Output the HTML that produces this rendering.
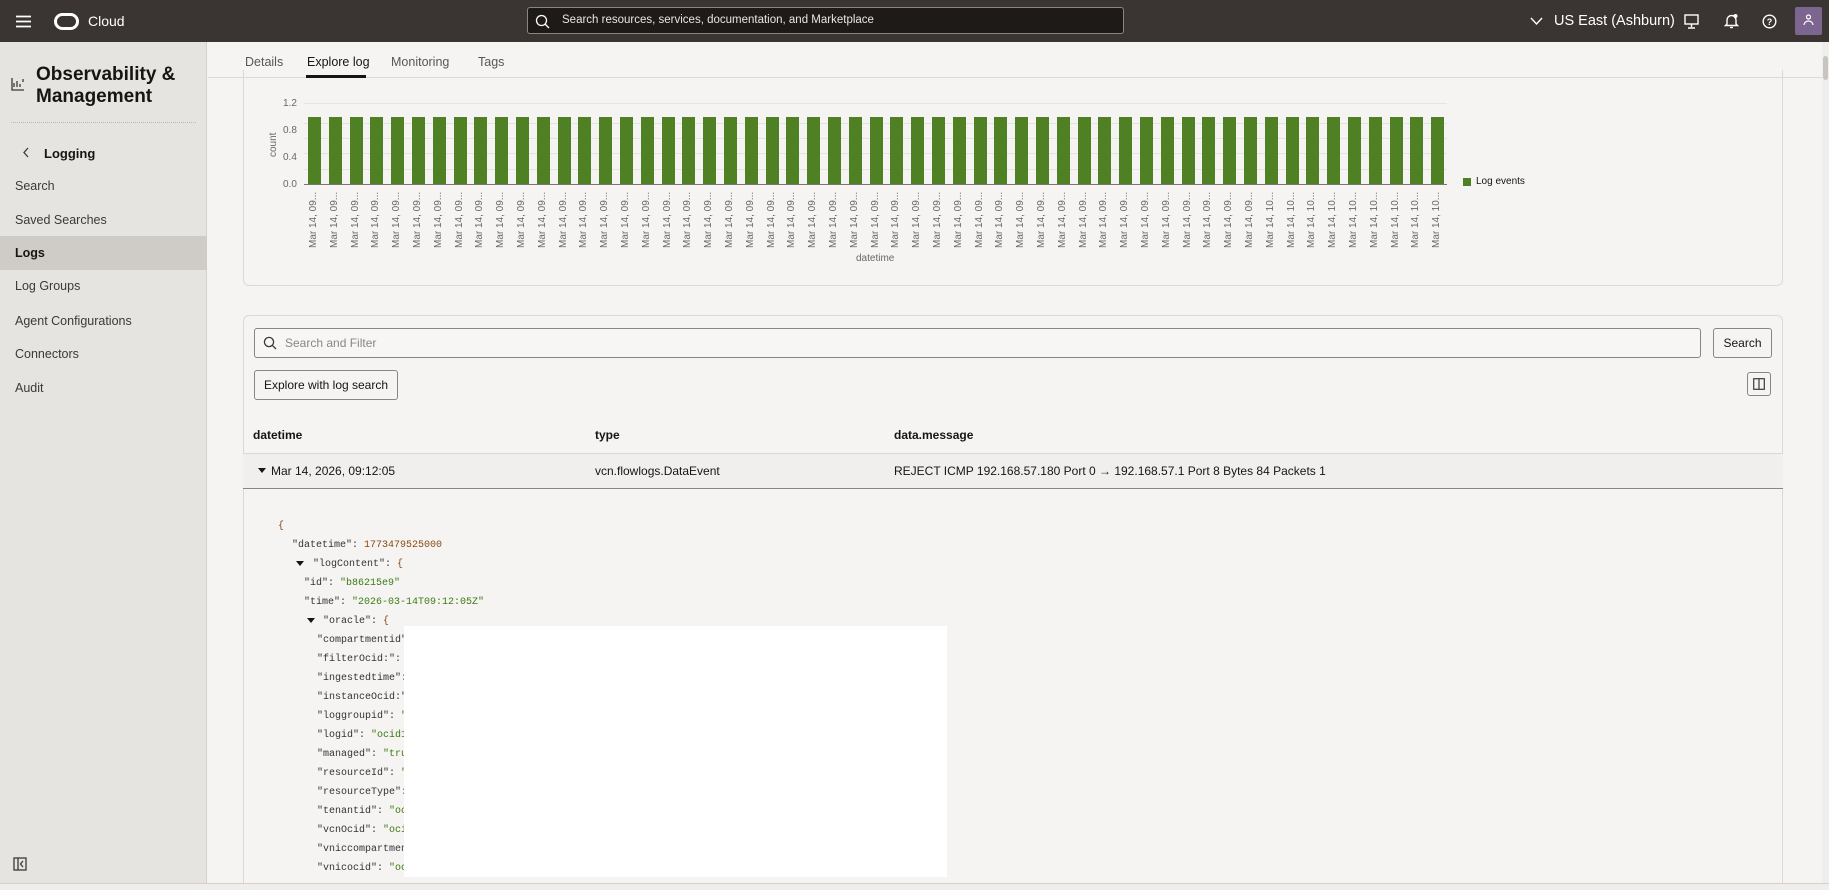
<!DOCTYPE html>
<html><head><meta charset="utf-8">
<style>
*{box-sizing:border-box;margin:0;padding:0}
html,body{width:1829px;height:890px;overflow:hidden}
body{background:#f5f4f2;font-family:"Liberation Sans",sans-serif;color:#161513;position:relative}
.abs{position:absolute}
#hdr{left:0;top:0;width:1829px;height:42px;background:#3a3532}
#side{left:0;top:42px;width:207px;height:848px;background:#e6e4e1;border-right:1px solid #d4d1cd}
.nav{position:absolute;left:15px;font-size:12.5px;color:#3d3935}
.mono{font-family:"Liberation Mono",monospace;font-size:10px;position:absolute;color:#333;white-space:pre}
.s{color:#3c7a12}.n{color:#8a4a10}
.xl{position:absolute;top:192px;font-size:10px;color:#6b6763;writing-mode:vertical-rl;transform:rotate(180deg);height:56px;text-align:left;white-space:nowrap;overflow:hidden}
</style></head><body>
<div id="hdr" class="abs">
 <svg class="abs" style="left:16px;top:15px" width="15" height="13"><path d="M0 1.5H15M0 6.5H15M0 11.5H15" stroke="#fff" stroke-width="1.8"/></svg>
 <div class="abs" style="left:54px;top:13px;width:25px;height:17px;border:3px solid #fff;border-radius:9px"></div>
 <div class="abs" style="left:88px;top:13px;color:#fff;font-size:14px">Cloud</div>
 <div class="abs" style="left:527px;top:7px;width:597px;height:27px;background:#1e1a18;border:1px solid #8a8580;border-radius:3px"></div>
 <svg class="abs" style="left:535px;top:14px" width="15" height="15"><circle cx="6.5" cy="6.5" r="5" stroke="#fff" stroke-width="1.3" fill="none"/><path d="M10 10L14 14" stroke="#fff" stroke-width="1.3"/></svg>
 <div class="abs" style="left:562px;top:14px;color:#e8e6e3;font-size:11.5px">Search resources, services, documentation, and Marketplace</div>
 <svg class="abs" style="left:1530px;top:17px" width="13" height="9"><path d="M1 1L6.5 7L12 1" stroke="#fff" stroke-width="1.4" fill="none"/></svg>
 <div class="abs" style="left:1554px;top:13px;color:#fff;font-size:14.5px">US East (Ashburn)</div>
 <svg class="abs" style="left:1684px;top:14px" width="15" height="15"><rect x="1" y="1" width="13" height="9" fill="none" stroke="#fff" stroke-width="1.4"/><path d="M7.5 10V13M4 14H11" stroke="#fff" stroke-width="1.4"/></svg>
 <svg class="abs" style="left:1724px;top:13px" width="15" height="16"><path d="M3 11V7a4.5 4.5 0 019 0v4l1.5 1.5h-12z" fill="none" stroke="#fff" stroke-width="1.4"/><circle cx="11.5" cy="3" r="2" fill="#fff"/><path d="M6 14.5h3" stroke="#fff" stroke-width="1.4"/></svg>
 <svg class="abs" style="left:1762px;top:14px" width="15" height="15"><circle cx="7.5" cy="7.5" r="6.3" fill="none" stroke="#fff" stroke-width="1.4"/><text x="7.5" y="11" font-size="9" fill="#fff" text-anchor="middle" font-family="Liberation Sans" font-weight="bold">?</text></svg>
 <div class="abs" style="left:1795px;top:7px;width:27px;height:28px;background:#7c6690;border-radius:2px"></div>
 <svg class="abs" style="left:1801px;top:13px" width="15" height="15"><circle cx="7.5" cy="4" r="2" fill="none" stroke="#fff" stroke-width="1.2"/><path d="M3 12a4.5 4 0 019 0" fill="none" stroke="#fff" stroke-width="1.2"/></svg>
</div>
<div id="side" class="abs">
 <svg class="abs" style="left:11px;top:35px" width="14" height="14"><path d="M1 1V13H13M3 10V6M6 10V4M9 10V7M12 5V2" stroke="#3d3935" stroke-width="1.3" fill="none"/></svg>
 <div class="abs" style="left:36px;top:22px;font-size:19px;font-weight:bold;line-height:22px">Observability &amp;<br>Management</div>
 <div class="abs" style="left:11px;top:80px;width:185px;border-top:1px dotted #bdb9b5"></div>
 <svg class="abs" style="left:22px;top:105px" width="8" height="11"><path d="M6 1L2 5.5L6 10" stroke="#3d3935" stroke-width="1.3" fill="none"/></svg>
 <div class="abs" style="left:44px;top:104px;font-size:13px;font-weight:bold">Logging</div>
 <div class="nav" style="top:137px">Search</div>
 <div class="nav" style="top:171px">Saved Searches</div>
 <div class="abs" style="left:0;top:194px;width:207px;height:34px;background:#cfccc8"></div>
 <div class="nav" style="top:204px;color:#161513;font-weight:bold">Logs</div>
 <div class="nav" style="top:237px">Log Groups</div>
 <div class="nav" style="top:272px">Agent Configurations</div>
 <div class="nav" style="top:305px">Connectors</div>
 <div class="nav" style="top:339px">Audit</div>
 <svg class="abs" style="left:13px;top:815px" width="14" height="14"><rect x="1" y="1" width="12" height="12" fill="none" stroke="#3d3935" stroke-width="1.3"/><path d="M5 1V13M10 4L7.5 7L10 10" stroke="#3d3935" stroke-width="1.3" fill="none"/></svg>
</div>
<div class="abs" style="left:208px;top:42px;width:1614px;height:36px;background:#f5f4f2;border-bottom:1px solid #dcd9d5"></div>
<div class="abs" style="left:245px;top:55px;font-size:12.5px;color:#5a5652">Details</div>
<div class="abs" style="left:307px;top:55px;font-size:12.5px;color:#161513">Explore log</div>
<div class="abs" style="left:306px;top:75px;width:60px;height:3px;background:#161513"></div>
<div class="abs" style="left:391px;top:55px;font-size:12.5px;color:#5a5652">Monitoring</div>
<div class="abs" style="left:478px;top:55px;font-size:12.5px;color:#5a5652">Tags</div>
<div class="abs" style="left:243px;top:70px;width:1540px;height:216px;border:1px solid #dcd9d5;border-top:none;border-radius:0 0 6px 6px"></div>
<div class="abs" style="left:268px;font-size:10px;color:#6b6763;transform:rotate(-90deg);transform-origin:left top;top:157px">count</div>
<div class="abs" style="left:283px;top:98px;font-size:10px;color:#6b6763">1.2</div>
<div class="abs" style="left:283px;top:125px;font-size:10px;color:#6b6763">0.8</div>
<div class="abs" style="left:283px;top:152px;font-size:10px;color:#6b6763">0.4</div>
<div class="abs" style="left:283px;top:179px;font-size:10px;color:#6b6763">0.0</div>
<div id="chart"></div>
<div class="abs" style="left:304px;top:184px;width:1143px;height:1px;background:#7a7672"></div>
<div class="abs" style="left:856px;top:253px;font-size:10px;color:#6b6763">datetime</div>
<div class="abs" style="left:1463px;top:178px;width:8px;height:8px;background:#4f8023"></div>
<div class="abs" style="left:1476px;top:176px;font-size:10px;color:#161513">Log events</div>
<div class="abs" style="left:243px;top:315px;width:1540px;height:568px;border:1px solid #dcd9d5;border-bottom:none;border-radius:6px 6px 0 0"></div>
<div class="abs" style="left:254px;top:328px;width:1447px;height:30px;border:1px solid #8a8580;border-radius:3px;background:#f7f6f4"></div>
<svg class="abs" style="left:263px;top:336px" width="14" height="14"><circle cx="6" cy="6" r="4.6" fill="none" stroke="#3d3935" stroke-width="1.3"/><path d="M9.3 9.3L13 13" stroke="#3d3935" stroke-width="1.3"/></svg>
<div class="abs" style="left:285px;top:336px;font-size:12px;color:#8a8682">Search and Filter</div>
<div class="abs" style="left:1713px;top:328px;width:59px;height:30px;border:1px solid #8a8580;border-radius:3px;font-size:12px;text-align:center;line-height:28px">Search</div>
<div class="abs" style="left:254px;top:370px;width:144px;height:30px;border:1px solid #8a8580;border-radius:3px;font-size:12px;text-align:center;line-height:29px">Explore with log search</div>
<div class="abs" style="left:1747px;top:372px;width:24px;height:24px;border:1px solid #8a8580;border-radius:3px"></div>
<svg class="abs" style="left:1753px;top:378px" width="12" height="12"><rect x="0.7" y="0.7" width="10.6" height="10.6" fill="none" stroke="#3d3935" stroke-width="1.2"/><path d="M6 1V11" stroke="#3d3935" stroke-width="1.2"/></svg>
<div class="abs" style="left:253px;top:428px;font-size:12px;font-weight:bold">datetime</div>
<div class="abs" style="left:595px;top:428px;font-size:12px;font-weight:bold">type</div>
<div class="abs" style="left:894px;top:428px;font-size:12px;font-weight:bold">data.message</div>
<div class="abs" style="left:243px;top:453px;width:1540px;height:36px;background:#f1efed;border-top:1px solid #dcd9d5;border-bottom:1px solid #8a8580"></div>
<svg class="abs" style="left:258px;top:468px" width="8" height="5"><path d="M0 0H8L4 5z" fill="#161513"/></svg>
<div class="abs" style="left:271px;top:464px;font-size:12px">Mar 14, 2026, 09:12:05</div>
<div class="abs" style="left:595px;top:464px;font-size:12px">vcn.flowlogs.DataEvent</div>
<div class="abs" style="left:894px;top:464px;font-size:12px">REJECT ICMP 192.168.57.180 Port 0 → 192.168.57.1 Port 8 Bytes 84 Packets 1</div>
<div class="mono" style="left:278px;top:521px;color:#8a4a10">{</div>
<div class="mono" style="left:292px;top:540px">"datetime": <span class="n">1773479525000</span></div>
<svg class="abs" style="left:296px;top:561px" width="8" height="5"><path d="M0 0H8L4 5z" fill="#161513"/></svg>
<div class="mono" style="left:313px;top:559px">"logContent": <span class="n">{</span></div>
<div class="mono" style="left:304px;top:578px">"id": <span class="s">"b86215e9"</span></div>
<div class="mono" style="left:304px;top:597px">"time": <span class="s">"2026-03-14T09:12:05Z"</span></div>
<svg class="abs" style="left:307px;top:618px" width="8" height="5"><path d="M0 0H8L4 5z" fill="#161513"/></svg>
<div class="mono" style="left:323px;top:616px">"oracle": <span class="n">{</span></div>
<div class="mono" style="left:317px;top:635px">"compartmentid"</div>
<div class="mono" style="left:317px;top:654px">"filterOcid:": "</div>
<div class="mono" style="left:317px;top:673px">"ingestedtime":</div>
<div class="mono" style="left:317px;top:692px">"instanceOcid:"</div>
<div class="mono" style="left:317px;top:711px">"loggroupid": <span class="s">"o</span></div>
<div class="mono" style="left:317px;top:730px">"logid": <span class="s">"ocid1</span></div>
<div class="mono" style="left:317px;top:749px">"managed": <span class="s">"true</span></div>
<div class="mono" style="left:317px;top:768px">"resourceId": <span class="s">"o</span></div>
<div class="mono" style="left:317px;top:787px">"resourceType":</div>
<div class="mono" style="left:317px;top:806px">"tenantid": <span class="s">"oci</span></div>
<div class="mono" style="left:317px;top:825px">"vcnOcid": <span class="s">"ocid</span></div>
<div class="mono" style="left:317px;top:844px">"vniccompartment</div>
<div class="mono" style="left:317px;top:863px">"vnicocid": <span class="s">"oci</span></div>
<div class="abs" style="left:404px;top:626px;width:543px;height:251px;background:#fff"></div>
<div class="abs" style="left:0;top:883px;width:1829px;height:7px;background:#f0eeec;border-top:1px solid #d4d1cd"></div>
<div class="abs" style="left:1822px;top:42px;width:7px;height:841px;background:#f0eeec"></div>
<div class="abs" style="left:1823px;top:56px;width:5px;height:24px;background:#c8c5c1;border-radius:3px"></div>
<script>
var c=document.getElementById('chart'),h='';
[103,123,138,153,169].forEach(function(y){h+='<div class="abs" style="left:304px;top:'+y+'px;width:1143px;height:1px;background:#e6e4e1"></div>';});
for(var i=0;i<55;i++){var x=308+i*20.8;
h+='<div class="abs" style="left:'+x.toFixed(1)+'px;top:117px;width:13px;height:67px;background:#4f8023"></div>';
h+='<div class="xl" style="left:'+(x).toFixed(1)+'px">Mar 14, '+(i<46?'09':'10')+'...</div>';}
c.innerHTML=h;
</script>
</body></html>
